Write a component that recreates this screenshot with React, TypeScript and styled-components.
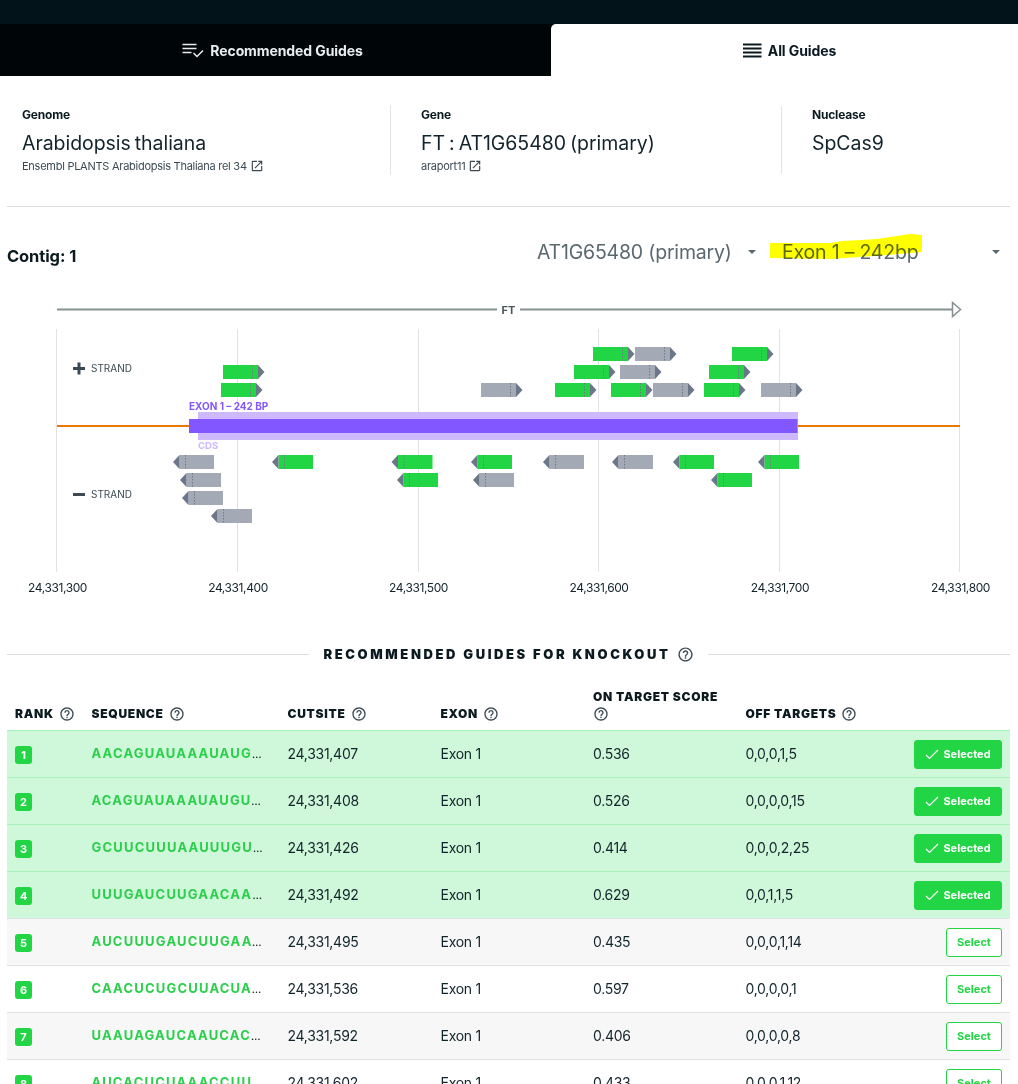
import styled, { createGlobalStyle } from "styled-components";
import { MdHelpOutline, MdOpenInNew } from "react-icons/md";

const GlobalStyle = createGlobalStyle`
  html, body {
    margin: 0;
    padding: 0;
    height: 1084px;
    overflow: hidden;
    background: #fff;
    font-family: Inter, "Liberation Sans", sans-serif;
    color: #0b1a20;
  }
`;

const TopBar = styled.div`
  height: 24px;
  background: #02141a;
`;

const Tabs = styled.div`
  display: grid;
  grid-template-columns: 551px 1fr;
  height: 52px;
  background: #000508;
`;

const Tab = styled.div<{ $active?: boolean }>`
  display: flex;
  align-items: center;
  justify-content: center;
  gap: 6px;
  padding: ${({ $active }) => ($active ? "0 0 0 10px" : "0 6px 0 0")};
  font-size: 14px;
  font-weight: 700;
  letter-spacing: -0.1px;
  color: ${({ $active }) => ($active ? "#0b1a20" : "#e8edef")};
  background: ${({ $active }) => ($active ? "#fff" : "#000508")};
  border-top-left-radius: ${({ $active }) => ($active ? "5px" : "0")};
`;

const Page = styled.div`
  padding: 0 8px 0 7px;
`;

const InfoRow = styled.div`
  display: grid;
  grid-template-columns: 384px 391px 1fr;
  padding: 30px 0 32px;
  border-bottom: 1px solid #d9dddf;
`;

const InfoCell = styled.div<{ $first?: boolean; $last?: boolean }>`
  height: 68px;
  padding-left: ${({ $first }) => ($first ? "15px" : "30px")};
  border-right: ${({ $last }) => ($last ? "none" : "1px solid #dfe3e5")};
`;

const InfoLabel = styled.div`
  margin-top: 2px;
  font-size: 12px;
  line-height: 14px;
  font-weight: 700;
  letter-spacing: -0.2px;
`;

const InfoValue = styled.div`
  margin-top: 7px;
  font-size: 19.5px;
  line-height: 28px;
  letter-spacing: -0.05px;
  word-spacing: -1.4px;
  color: #12242b;
`;

const InfoSub = styled.div`
  display: flex;
  align-items: center;
  gap: 3px;
  margin-top: 2px;
  font-size: 11px;
  line-height: 14px;
  letter-spacing: -0.26px;
  color: #3b4a52;
`;

const ContigRow = styled.div`
  display: flex;
  align-items: center;
  justify-content: space-between;
  height: 32px;
  margin-top: 33px;
`;

const ContigLabel = styled.div`
  font-size: 16.5px;
  font-weight: 650;
  letter-spacing: -0.1px;
`;

const Selects = styled.div`
  display: flex;
  gap: 24px;
  padding-right: 8px;
`;

const SelectBox = styled.div<{ $width: number }>`
  position: relative;
  display: flex;
  align-items: center;
  justify-content: space-between;
  width: ${({ $width }) => $width}px;
  height: 32px;
  box-sizing: border-box;
  padding: 0 2px 8px 0;
  font-size: 19.5px;
  letter-spacing: -0.2px;
  color: #5a686f;
`;

const Caret = styled.span`
  width: 0;
  height: 0;
  border-left: 4px solid transparent;
  border-right: 4px solid transparent;
  border-top: 4px solid #5a686f;
`;

const Highlight = styled.svg`
  position: absolute;
  left: -12px;
  top: -6px;
  mix-blend-mode: multiply;
`;

const TrackChart = styled.svg`
  display: block;
  margin: 25px 0 0 -7px;
`;

const TitleRow = styled.div`
  display: flex;
  align-items: center;
  height: 20px;
  margin-top: 45px;
`;

const TitleLine = styled.div`
  flex: 1;
  height: 1px;
  background: #d9dddf;
`;

const Title = styled.div`
  display: flex;
  align-items: center;
  gap: 6px;
  margin: 0 14px;
  font-size: 13px;
  font-weight: 900;
  letter-spacing: 2.6px;
  color: #0b1a20;
`;

const COLUMNS = "76.5px 196px 153px 152.5px 152.5px 1fr auto";

const HeaderRow = styled.div`
  display: grid;
  grid-template-columns: ${COLUMNS};
  align-items: end;
  height: 66px;
  box-sizing: border-box;
  padding: 0 8px 8px 8px;
`;

const HeaderCell = styled.div<{ $stacked?: boolean }>`
  display: flex;
  flex-direction: ${({ $stacked }) => ($stacked ? "column" : "row")};
  align-items: ${({ $stacked }) => ($stacked ? "flex-start" : "center")};
  gap: ${({ $stacked }) => ($stacked ? "1px" : "5px")};
  font-size: 12px;
  line-height: 17px;
  font-weight: 900;
  letter-spacing: 0.72px;
  white-space: nowrap;
  color: #0b1a20;
`;

const HelpIcon = styled(MdHelpOutline)`
  color: #3b4a52;
  flex: none;
`;

const Row = styled.div<{ $selected: boolean; $odd: boolean }>`
  display: grid;
  grid-template-columns: ${COLUMNS};
  align-items: center;
  height: 47px;
  box-sizing: border-box;
  padding: 0 8px;
  font-size: 14px;
  letter-spacing: -0.28px;
  color: #12242b;
  border-top: 1px solid ${({ $selected }) => ($selected ? "#a9f0ba" : "#dde3e6")};
  background: ${({ $selected, $odd }) =>
    $selected ? "#cff7d9" : $odd ? "#f7f7f7" : "#fff"};
`;

const Cell = styled.div`
  padding-bottom: 2px;
`;

const RankBadge = styled.span`
  display: inline-block;
  min-width: 7px;
  padding: 0 5px;
  height: 18px;
  line-height: 18px;
  border-radius: 3px;
  background: #22d544;
  color: #fff;
  font-size: 11px;
  font-weight: 700;
  text-align: center;
  letter-spacing: 0;
`;

// the dark, narrow ellipsis comes from the smaller font on this wrapper
const Sequence = styled.div`
  width: 172px;
  padding-bottom: 2px;
  overflow: hidden;
  white-space: nowrap;
  text-overflow: ellipsis;
  font-size: 9px;
  font-weight: 800;
  letter-spacing: 0;
  color: #0b1a20;
`;

const SequenceText = styled.span`
  font-size: 13px;
  font-weight: 700;
  letter-spacing: 1.2px;
  color: #2ccf4c;
`;

const SelectButton = styled.button<{ $selected: boolean }>`
  display: flex;
  align-items: center;
  justify-content: center;
  gap: 4px;
  width: ${({ $selected }) => ($selected ? "88px" : "56px")};
  height: 29px;
  padding: 0;
  margin-left: auto;
  border-radius: 3px;
  border: 1px solid #22d544;
  background: ${({ $selected }) => ($selected ? "#22d544" : "#fff")};
  color: ${({ $selected }) => ($selected ? "#fff" : "#22d544")};
  font-family: inherit;
  font-size: 11px;
  font-weight: 700;
`;

const GREEN = "#22d544";
const GRAY = "#a4aab5";
const TIP = "#6b7789";
const CUT = "#6f7a85";

// guide x is the left edge of the body, y is the top of the body
const plusGuides = [
  { x: 223, y: 365, on: true },
  { x: 221, y: 383, on: true },
  { x: 593, y: 347, on: true },
  { x: 635, y: 347, on: false },
  { x: 732, y: 347, on: true },
  { x: 574, y: 365, on: true },
  { x: 620, y: 365, on: false },
  { x: 709, y: 365, on: true },
  { x: 481, y: 383, on: false },
  { x: 555, y: 383, on: true },
  { x: 611, y: 383, on: true },
  { x: 653, y: 383, on: false },
  { x: 704, y: 383, on: true },
  { x: 761, y: 383, on: false },
];

const minusGuides = [
  { x: 179.5, y: 455, on: false },
  { x: 278.5, y: 455, on: true },
  { x: 398, y: 455, on: true },
  { x: 186.5, y: 473, on: false },
  { x: 403.5, y: 473, on: true },
  { x: 188.5, y: 491, on: false },
  { x: 217.5, y: 509, on: false },
  { x: 477.5, y: 455, on: true },
  { x: 549.5, y: 455, on: false },
  { x: 618.5, y: 455, on: false },
  { x: 679.5, y: 455, on: true },
  { x: 764.5, y: 455, on: true },
  { x: 479.5, y: 473, on: false },
  { x: 717.5, y: 473, on: true },
];

const gridLines = [56.5, 237.5, 418.5, 598.5, 779.5, 959.5];
const axisTicks = [
  { x: 57.5, label: "24,331,300" },
  { x: 238, label: "24,331,400" },
  { x: 418.5, label: "24,331,500" },
  { x: 599, label: "24,331,600" },
  { x: 780, label: "24,331,700" },
  { x: 960.5, label: "24,331,800" },
];

const guides = [
  { rank: 1, seq: "AACAGUAUAAAUAUGUAAGC", cut: "24,331,407", score: "0.536", off: "0,0,0,1,5", selected: true },
  { rank: 2, seq: "ACAGUAUAAAUAUGUAAGCA", cut: "24,331,408", score: "0.526", off: "0,0,0,0,15", selected: true },
  { rank: 3, seq: "GCUUCUUUAAUUUGUUCAAG", cut: "24,331,426", score: "0.414", off: "0,0,0,2,25", selected: true },
  { rank: 4, seq: "UUUGAUCUUGAACAAAGAUA", cut: "24,331,492", score: "0.629", off: "0,0,1,1,5", selected: true },
  { rank: 5, seq: "AUCUUUGAUCUUGAACAAAG", cut: "24,331,495", score: "0.435", off: "0,0,0,1,14", selected: false },
  { rank: 6, seq: "CAACUCUGCUUACUAUAGGC", cut: "24,331,536", score: "0.597", off: "0,0,0,0,1", selected: false },
  { rank: 7, seq: "UAAUAGAUCAAUCACUCUAA", cut: "24,331,592", score: "0.406", off: "0,0,0,0,8", selected: false },
  { rank: 8, seq: "AUCACUCUAAACCUUUGGAG", cut: "24,331,602", score: "0.433", off: "0,0,0,1,12", selected: false },
];

function PlusGuide({ x, y, on }: { x: number; y: number; on: boolean }) {
  return (
    <g>
      <rect x={x} y={y} width={35} height={14} fill={on ? GREEN : GRAY} />
      <polygon points={`${x + 35},${y} ${x + 41.5},${y + 7} ${x + 35},${y + 14}`} fill={TIP} />
      <line x1={x + 29.5} x2={x + 29.5} y1={y} y2={y + 14} stroke={CUT} strokeDasharray="1.5 1.5" />
    </g>
  );
}

function MinusGuide({ x, y, on }: { x: number; y: number; on: boolean }) {
  return (
    <g>
      <rect x={x} y={y} width={34.5} height={14} fill={on ? GREEN : GRAY} />
      <polygon points={`${x},${y} ${x - 6.5},${y + 7} ${x},${y + 14}`} fill={TIP} />
      <line x1={x + 6} x2={x + 6} y1={y} y2={y + 14} stroke={CUT} strokeDasharray="1.5 1.5" />
    </g>
  );
}

function GeneTrack() {
  // the drawing starts at y=297 of the page
  return (
    <TrackChart width={1018} height={302} viewBox="0 297 1018 302">
      <line x1={57} x2={497} y1={309.5} y2={309.5} stroke="#85918f" strokeWidth={2} />
      <line x1={520} x2={953} y1={309.5} y2={309.5} stroke="#85918f" strokeWidth={2} />
      <polygon points="952.5,302.5 960.5,309.5 952.5,316.5" fill="#fff" stroke="#85918f" strokeWidth={1.5} />
      <text x={508.5} y={314} textAnchor="middle" fontSize={11} fontWeight={700} fill="#4a575c">FT</text>

      {gridLines.map((x) => (
        <line key={x} x1={x} x2={x} y1={329} y2={572} stroke="#e0e2e4" strokeWidth={1} />
      ))}

      <rect x={73} y={367} width={12} height={3} fill="#3b4a52" />
      <rect x={77.5} y={362.5} width={3} height={12} fill="#3b4a52" />
      <text x={91} y={372} fontSize={10} fill="#3b4a52">STRAND</text>
      <rect x={73} y={493} width={12} height={3} fill="#3b4a52" />
      <text x={91} y={498} fontSize={10} fill="#3b4a52">STRAND</text>

      {plusGuides.map((g) => (
        <PlusGuide key={`${g.x}-${g.y}`} {...g} />
      ))}
      {minusGuides.map((g) => (
        <MinusGuide key={`${g.x}-${g.y}`} {...g} />
      ))}

      <line x1={57} x2={960} y1={426} y2={426} stroke="#e87a00" strokeWidth={2} />
      <rect x={198} y={412} width={600} height={28} fill="#ceb9ff" />
      <rect x={189} y={419} width={608.5} height={14} fill="#8357ff" />
      <text x={189} y={410} fontSize={10} fontWeight={700} fill="#8357ff">EXON 1 – 242 BP</text>
      <text x={198} y={449} fontSize={9.5} fontWeight={700} fill="#ceb9ff">CDS</text>

      {axisTicks.map((t) => (
        <text key={t.x} x={t.x} y={592} textAnchor="middle" fontSize={12} letterSpacing={-0.4} fill="#12242b">
          {t.label}
        </text>
      ))}
    </TrackChart>
  );
}

export default function App() {
  return (
    <>
      <GlobalStyle />
      <TopBar />
      <Tabs>
        <Tab>
          <svg width="22" height="16" viewBox="0 0 22 16" fill="none" stroke="#e8edef">
            <path d="M0.5 2.5h14M0.5 6.5h14M0.5 10.5h9" strokeWidth="1.5" />
            <path d="M11.5 11l3.5 3.5 6-6" strokeWidth="1.5" />
          </svg>
          Recommended Guides
        </Tab>
        <Tab $active>
          <svg width="19" height="15" viewBox="0 0 19 15" fill="#0b1a20">
            <rect y="0.5" width="18.5" height="2" />
            <rect y="4.5" width="18.5" height="2" />
            <rect y="8.5" width="18.5" height="2" />
            <rect y="12.5" width="18.5" height="2" />
          </svg>
          All Guides
        </Tab>
      </Tabs>
      <Page>
        <InfoRow>
          <InfoCell $first>
            <InfoLabel>Genome</InfoLabel>
            <InfoValue>Arabidopsis thaliana</InfoValue>
            <InfoSub>
              Ensembl PLANTS Arabidopsis Thaliana rel 34 <MdOpenInNew size={14} />
            </InfoSub>
          </InfoCell>
          <InfoCell>
            <InfoLabel>Gene</InfoLabel>
            <InfoValue>FT : AT1G65480 (primary)</InfoValue>
            <InfoSub>
              araport11 <MdOpenInNew size={14} />
            </InfoSub>
          </InfoCell>
          <InfoCell $last>
            <InfoLabel>Nuclease</InfoLabel>
            <InfoValue>SpCas9</InfoValue>
          </InfoCell>
        </InfoRow>

        <ContigRow>
          <ContigLabel>Contig: 1</ContigLabel>
          <Selects>
            <SelectBox $width={221}>
              AT1G65480 (primary)
              <Caret />
            </SelectBox>
            <SelectBox $width={220}>
              Exon 1 – 242bp
              <Caret />
              <Highlight width="152" height="26" viewBox="0 0 152 26">
                <path d="M0 9 L60 9 L73 7 L107 5 L140 0 L152 1 L152 18 L117 21 L60 25 L0 24 Z" fill="#ffff00" />
              </Highlight>
            </SelectBox>
          </Selects>
        </ContigRow>

        <GeneTrack />

        <TitleRow>
          <TitleLine />
          <Title>
            RECOMMENDED GUIDES FOR KNOCKOUT <HelpIcon size={17} />
          </Title>
          <TitleLine />
        </TitleRow>

        <HeaderRow>
          <HeaderCell>
            RANK <HelpIcon size={16} />
          </HeaderCell>
          <HeaderCell>
            SEQUENCE <HelpIcon size={16} />
          </HeaderCell>
          <HeaderCell>
            CUTSITE <HelpIcon size={16} />
          </HeaderCell>
          <HeaderCell>
            EXON <HelpIcon size={16} />
          </HeaderCell>
          <HeaderCell $stacked>
            ON TARGET SCORE <HelpIcon size={16} />
          </HeaderCell>
          <HeaderCell>
            OFF TARGETS <HelpIcon size={16} />
          </HeaderCell>
        </HeaderRow>

        {guides.map((g) => (
          <Row key={g.rank} $selected={g.selected} $odd={g.rank % 2 === 1}>
            <div>
              <RankBadge>{g.rank}</RankBadge>
            </div>
            <Sequence>
              <SequenceText>{g.seq}</SequenceText>
            </Sequence>
            <Cell>{g.cut}</Cell>
            <Cell>Exon 1</Cell>
            <Cell>{g.score}</Cell>
            <Cell>{g.off}</Cell>
            <SelectButton $selected={g.selected}>
              {g.selected && (
                <svg width="14" height="11" viewBox="0 0 14 11" fill="none" stroke="#fff" strokeWidth="1.2">
                  <path d="M1 6l3.5 3.5L13 1" />
                </svg>
              )}
              {g.selected ? "Selected" : "Select"}
            </SelectButton>
          </Row>
        ))}
      </Page>
    </>
  );
}
